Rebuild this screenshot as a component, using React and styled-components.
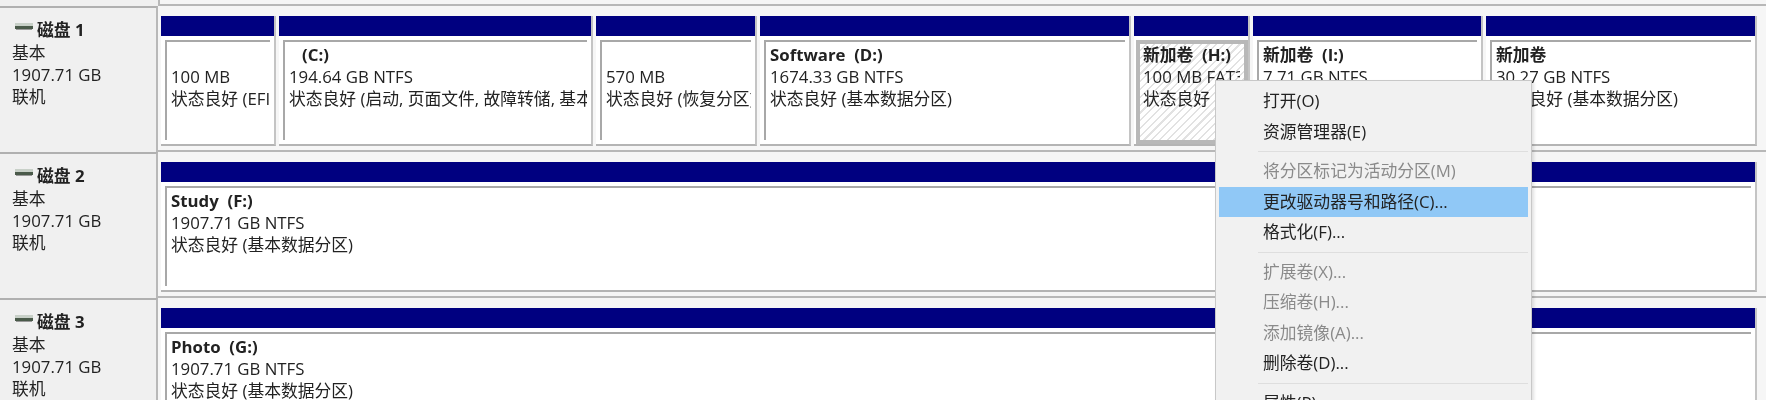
import styled, { createGlobalStyle } from 'styled-components';

const GlobalStyle = createGlobalStyle`
  html, body {
    margin: 0;
    padding: 0;
    height: 400px;
    overflow: hidden;
    background: #f6f6f6;
  }
  body {
    font-family: 'Open Sans', 'Noto Sans CJK SC', sans-serif;
    font-size: 16.8px;
    color: #222;
  }
`;

const Page = styled.div`
  position: relative;
  width: 1766px;
  height: 400px;
  overflow: hidden;
  filter: blur(0.45px);
`;

const DiskRow = styled.section`
  display: flex;
  height: 146px;
`;

const TopEdge = styled.div`
  height: 6px;
  display: flex;

  &::before {
    content: '';
    width: 158px;
    background: #f0f0f0;
    border-right: 2px solid #b8b8b8;
  }
`;

const DiskInfo = styled.div`
  width: 158px;
  flex: none;
  box-sizing: border-box;
  padding: 10px 0 0 12px;
  background: #f0f0f0;
  border-top: 2px solid #b0b0b0;
  border-right: 2px solid #b8b8b8;
  line-height: 22px;
`;

const DiskTitle = styled.div`
  display: flex;
  align-items: center;
  font-weight: 700;
  height: 24px;
`;

const DiskIcon = styled.svg`
  width: 18px;
  height: 8px;
  margin: -6px 4px 0 3px;
  flex: none;
`;

const Volumes = styled.div`
  flex: 1;
  min-width: 0;
  display: flex;
  gap: 3px;
  margin-top: -2px;
  padding: 10px 9px 0 3px;
  align-items: flex-start;
  border-top: 2px solid #b8b8b8;
`;

const Volume = styled.div`
  flex: ${(p) => (p.$width ? `0 0 ${p.$width}px` : '1')};
  min-width: 0;
  display: flex;
  flex-direction: column;
  height: 130px;
  box-sizing: border-box;
  border-right: 2px solid #c4c4c4;
  border-bottom: 2px solid #b4b4b4;
  background: #fff;
`;

const Bar = styled.div`
  height: 20px;
  flex: none;
  background: #000080;
`;

const Body = styled.div`
  flex: 1;
  min-height: 0;
  margin: 4px;
  padding: 2px 0 0 4px;
  overflow: hidden;
  white-space: nowrap;
  line-height: 22px;
  border-top: 2px solid #a8a8a8;
  border-left: 2px solid #a8a8a8;
  background: #fff;

  ${(p) =>
    p.$selected &&
    `
    margin: 4px 0 0 2px;
    padding: 0 0 0 3px;
    border: 4px solid #b8b8b8;
    background: repeating-linear-gradient(135deg, #fff 0 4px, #e2e2e2 4px 5.5px);

    > div {
      overflow: hidden;
      margin-right: 4px;
    }
  `}
`;

const VolumeName = styled.div`
  font-weight: 700;
  height: 22px;
  white-space: pre;
`;

const Menu = styled.div`
  position: absolute;
  left: 1215px;
  top: 80px;
  width: 317px;
  height: 340px;
  box-sizing: border-box;
  padding: 5px 3px;
  background: #f1f1f1;
  border: 1px solid #c8c8c8;
  box-shadow: 2px 2px 3px rgba(0, 0, 0, 0.12);
`;

const MenuItem = styled.div`
  height: 30.5px;
  line-height: 30.5px;
  padding-left: 44px;
  white-space: nowrap;
  color: ${(p) => (p.$disabled ? '#8a8a8a' : '#222')};
  background: ${(p) => (p.$active ? '#90c8f6' : 'transparent')};
`;

const MenuSeparator = styled.div`
  height: 1px;
  margin: 4px 0 4px 39px;
  background: #dedede;
`;

const disks = [
  {
    name: '磁盘 1',
    volumes: [
      { width: 115, size: '100 MB', status: '状态良好 (EFI 系统分区)' },
      { width: 314, name: '   (C:)', size: '194.64 GB NTFS', status: '状态良好 (启动, 页面文件, 故障转储, 基本数据分区)' },
      { width: 161, size: '570 MB', status: '状态良好 (恢复分区)' },
      { width: 371, name: 'Software  (D:)', size: '1674.33 GB NTFS', status: '状态良好 (基本数据分区)' },
      { width: 116, name: '新加卷  (H:)', size: '100 MB FAT32', status: '状态良好 (EFI 系统分区)', selected: true },
      { width: 230, name: '新加卷  (I:)', size: '7.71 GB NTFS', status: '状态良好 (基本数据分区)' },
      { name: '新加卷', size: '30.27 GB NTFS', status: '状态良好 (基本数据分区)' },
    ],
  },
  {
    name: '磁盘 2',
    volumes: [{ name: 'Study  (F:)', size: '1907.71 GB NTFS', status: '状态良好 (基本数据分区)' }],
  },
  {
    name: '磁盘 3',
    volumes: [{ name: 'Photo  (G:)', size: '1907.71 GB NTFS', status: '状态良好 (基本数据分区)' }],
  },
];

const menuGroups = [
  [{ label: '打开(O)' }, { label: '资源管理器(E)' }],
  [
    { label: '将分区标记为活动分区(M)', disabled: true },
    { label: '更改驱动器号和路径(C)...', active: true },
    { label: '格式化(F)...' },
  ],
  [
    { label: '扩展卷(X)...', disabled: true },
    { label: '压缩卷(H)...', disabled: true },
    { label: '添加镜像(A)...', disabled: true },
    { label: '删除卷(D)...' },
  ],
  [{ label: '属性(P)' }],
];

const HardDrive = () => (
  <DiskIcon viewBox="0 0 18 8">
    <rect x="0" y="0" width="18" height="3" fill="#c8d0c8" />
    <rect x="0" y="3" width="18" height="3" fill="#4a5a4a" />
    <rect x="1" y="6" width="16" height="1" fill="#999" />
  </DiskIcon>
);

const App = () => (
  <Page>
    <GlobalStyle />
    <TopEdge />
    {disks.map((disk) => (
      <DiskRow key={disk.name}>
        <DiskInfo>
          <DiskTitle>
            <HardDrive />
            {disk.name}
          </DiskTitle>
          <div>基本</div>
          <div>1907.71 GB</div>
          <div>联机</div>
        </DiskInfo>
        <Volumes>
          {disk.volumes.map((v) => (
            <Volume key={v.size + v.status} $width={v.width}>
              <Bar />
              <Body $selected={v.selected}>
                <VolumeName>{v.name}</VolumeName>
                <div>{v.size}</div>
                <div>{v.status}</div>
              </Body>
            </Volume>
          ))}
        </Volumes>
      </DiskRow>
    ))}
    <Menu>
      {menuGroups.map((group, i) => (
        <div key={i}>
          {i > 0 && <MenuSeparator />}
          {group.map((item) => (
            <MenuItem key={item.label} $disabled={item.disabled} $active={item.active}>
              {item.label}
            </MenuItem>
          ))}
        </div>
      ))}
    </Menu>
  </Page>
);

export default App;
